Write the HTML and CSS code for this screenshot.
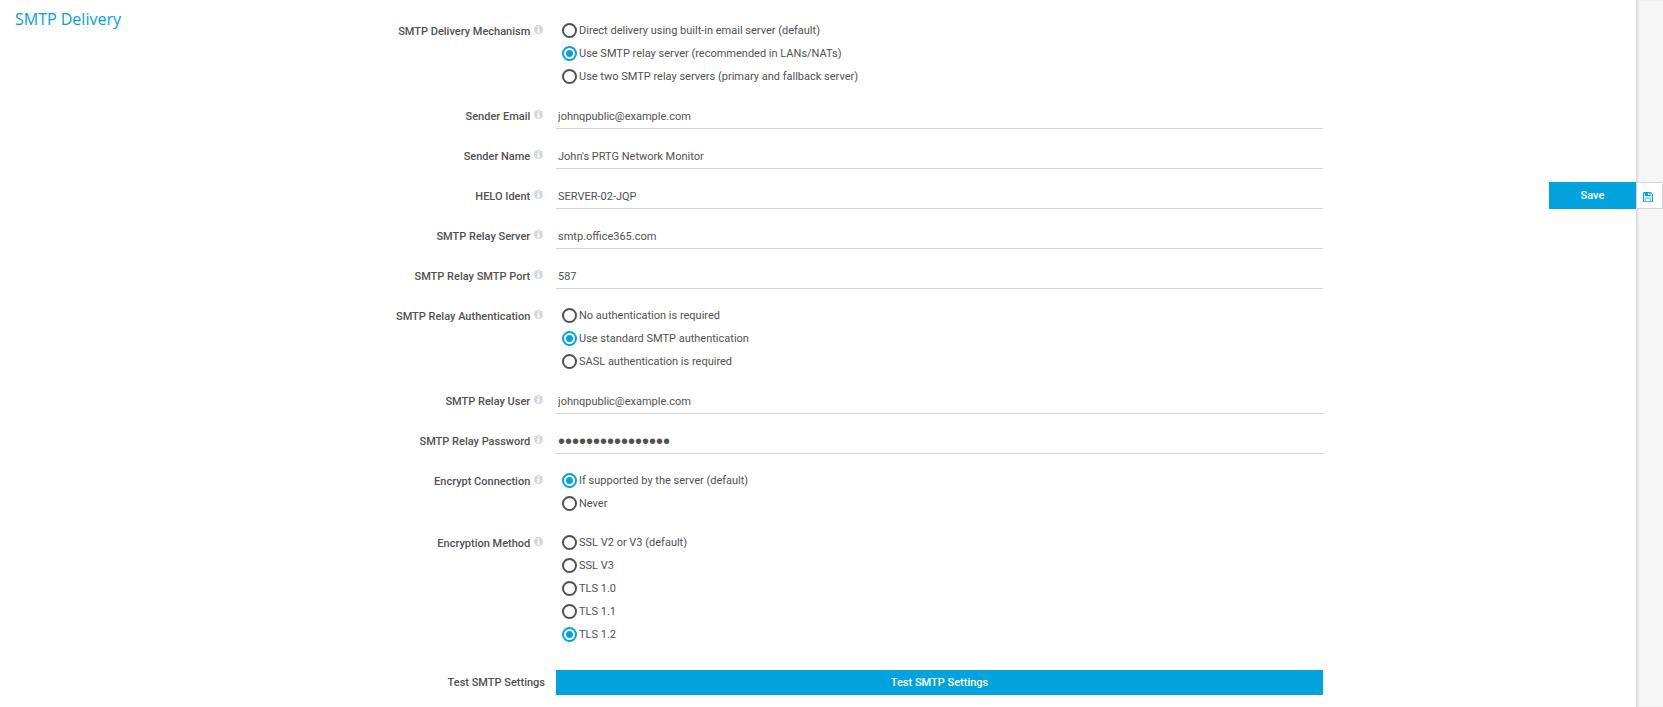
FILE: index.html
```html
<!doctype html>
<html lang="en">
<head>
    <meta charset="UTF-8">
    <meta name="viewport" content="width=device-width, initial-scale=1.0">
    <title>SMTP Delivery</title>
    <link rel="stylesheet" href="styles.css">
</head>
<body>
<svg class="sprite" aria-hidden="true">
    <symbol id="info" viewBox="0 0 9 9">
        <circle cx="4.5" cy="4.5" r="4.5" fill="#d4d6d8"/>
        <path d="M3.8 1.2h1.5v1.3H3.8zM3.1 3.4h2.2v3h.7v1H3v-1h.8v-2h-.7z" fill="#fff"/>
    </symbol>
</svg>

<form class="page" id="smtp">
    <main class="content">
        <h2 class="title">SMTP Delivery</h2>
        <div class="fields">
            <div class="row" role="radiogroup" aria-labelledby="l-mechanism">
                <span class="label" id="l-mechanism">SMTP Delivery Mechanism <svg class="info"><use href="#info"/></svg></span>
                <div class="options">
                    <label><input type="radio" name="mechanism"><span>Direct delivery using built-in email server (default)</span></label>
                    <label><input type="radio" name="mechanism" checked><span>Use SMTP relay server (recommended in LANs/NATs)</span></label>
                    <label><input type="radio" name="mechanism"><span>Use two SMTP relay servers (primary and fallback server)</span></label>
                </div>
            </div>
            <div class="row">
                <label class="label" for="email">Sender Email <svg class="info"><use href="#info"/></svg></label>
                <input class="text" type="text" id="email" value="johnqpublic@example.com">
            </div>
            <div class="row">
                <label class="label" for="name">Sender Name <svg class="info"><use href="#info"/></svg></label>
                <input class="text" type="text" id="name" value="John's PRTG Network Monitor">
            </div>
            <div class="row">
                <label class="label" for="helo">HELO Ident <svg class="info"><use href="#info"/></svg></label>
                <input class="text" type="text" id="helo" value="SERVER-02-JQP">
            </div>
            <div class="row">
                <label class="label" for="server">SMTP Relay Server <svg class="info"><use href="#info"/></svg></label>
                <input class="text" type="text" id="server" value="smtp.office365.com">
            </div>
            <div class="row">
                <label class="label" for="port">SMTP Relay SMTP Port <svg class="info"><use href="#info"/></svg></label>
                <input class="text" type="text" id="port" value="587">
            </div>
            <div class="row" role="radiogroup" aria-labelledby="l-auth">
                <span class="label" id="l-auth">SMTP Relay Authentication <svg class="info"><use href="#info"/></svg></span>
                <div class="options">
                    <label><input type="radio" name="auth"><span>No authentication is required</span></label>
                    <label><input type="radio" name="auth" checked><span>Use standard SMTP authentication</span></label>
                    <label><input type="radio" name="auth"><span>SASL authentication is required</span></label>
                </div>
            </div>
            <div class="row">
                <label class="label" for="user">SMTP Relay User <svg class="info"><use href="#info"/></svg></label>
                <input class="text" type="text" id="user" value="johnqpublic@example.com">
            </div>
            <div class="row">
                <label class="label" for="password">SMTP Relay Password <svg class="info"><use href="#info"/></svg></label>
                <input class="text password" type="password" id="password" value="0123456789abcdef">
            </div>
            <div class="row" role="radiogroup" aria-labelledby="l-encrypt">
                <span class="label" id="l-encrypt">Encrypt Connection <svg class="info"><use href="#info"/></svg></span>
                <div class="options">
                    <label><input type="radio" name="encrypt" checked><span>If supported by the server (default)</span></label>
                    <label><input type="radio" name="encrypt"><span>Never</span></label>
                </div>
            </div>
            <div class="row" role="radiogroup" aria-labelledby="l-method">
                <span class="label" id="l-method">Encryption Method <svg class="info"><use href="#info"/></svg></span>
                <div class="options">
                    <label><input type="radio" name="method"><span>SSL V2 or V3 (default)</span></label>
                    <label><input type="radio" name="method"><span>SSL V3</span></label>
                    <label><input type="radio" name="method"><span>TLS 1.0</span></label>
                    <label><input type="radio" name="method"><span>TLS 1.1</span></label>
                    <label><input type="radio" name="method" checked><span>TLS 1.2</span></label>
                </div>
            </div>
            <div class="row row-test">
                <label class="label" for="test">Test SMTP Settings</label>
                <button class="button" type="button" id="test">Test SMTP Settings</button>
            </div>
        </div>
    </main>
    <aside class="rail"></aside>

    <div class="save">
        <button class="button" type="submit">Save</button>
        <button class="save-icon" type="submit" aria-label="Save">
            <svg viewBox="0 0 10 10" width="10" height="10">
                <path d="M.5.5h7.3l1.7 1.7v7.3h-9z" fill="#d5f0fa" stroke="#00a3dd"/>
                <path d="M2 .5h5.5V4H2z" fill="#00a3dd"/>
                <path d="M5 1h1.4v2H5z" fill="#fff"/>
                <path d="M2.5 6.2h5v3.3h-5z" fill="#fff" stroke="#5cc4e9"/>
            </svg>
        </button>
    </div>
</form>
</body>
</html>
```
FILE: styles.css
```css
:root {
    --primary: #00a3dd;
    --text: #515151;
    --line: #d4d4d4;
}

* {
    box-sizing: border-box;
}

body {
    margin: 0;
    background-color: #fff;
}

body, input, button {
    font-family: Roboto, sans-serif;
    font-size: 11px;
    color: var(--text);
}

.sprite {
    display: none;
}

.page {
    display: flex;
    min-height: 100vh;
}

.content {
    flex: 1;
    display: flex;
    padding-right: 313px;
}

.title {
    flex: none;
    width: 320px;
    margin: 0;
    padding: 8px 0 0 15px;
    font-family: "Open Sans", "Noto Sans", sans-serif;
    font-size: 16px;
    font-weight: normal;
    line-height: 22px;
    color: var(--primary);
}

.fields {
    flex: 1;
    display: flex;
    flex-direction: column;
    gap: 15px;
    padding-top: 19px;
}

.row {
    display: grid;
    grid-template-columns: 236px 1fr;
}

.label {
    padding-right: 11px;
    font-weight: 500;
    line-height: 25px;
    text-align: right;
}

.info {
    width: 9px;
    height: 9px;
    margin: 0 2px 0 1px;
    vertical-align: 1px;
}

.options {
    padding: 0 0 1px 6px;
}

.options label {
    display: flex;
    align-items: center;
    gap: 2px;
    height: 23px;
}

input[type="radio"] {
    appearance: none;
    flex: none;
    width: 15px;
    height: 15px;
    margin: 0;
    border: 2px solid var(--text);
    border-radius: 50%;
}

input[type="radio"]:checked {
    border-color: var(--primary);
    background: radial-gradient(circle, var(--primary) 3px, #fff 4px);
}

.text {
    width: 100%;
    height: 25px;
    padding: 0 2px;
    border: none;
    border-bottom: 1px solid var(--line);
    background-color: transparent;
}

.text:focus {
    outline: none;
    border-bottom-color: var(--primary);
}

.password {
    font-family: "Liberation Sans", sans-serif;
    font-size: 20px;
}

.row-test {
    margin-top: 8px;
}

.button {
    height: 25px;
    border: none;
    background-color: var(--primary);
    color: #fff;
    font-weight: 500;
    cursor: pointer;
}

.rail {
    width: 27px;
    background-color: #f6f6f6;
    box-shadow: inset 2px 0 2px #dcdcdc;
}

.save {
    position: fixed;
    top: 182px;
    right: 0;
    display: flex;
}

.save .button {
    width: 87px;
    height: 27px;
}

.save-icon {
    display: flex;
    align-items: center;
    justify-content: center;
    width: 27px;
    padding: 3px 3px 0 0;
    border: 1px solid var(--line);
    background-color: #fff;
    cursor: pointer;
}
```
